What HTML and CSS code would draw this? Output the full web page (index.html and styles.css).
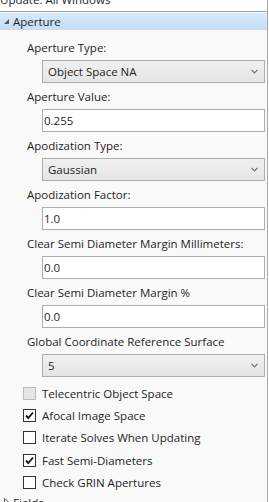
FILE: index.html
```html
<!doctype html>
<html>
<head>
    <title>Aperture</title>
    <meta charset="utf-8">
    <link rel="stylesheet" href="styles.css">
</head>
<body>
    <div class="pane">
        <!-- 上一组 -->
        <div class="update"><span>Update: All Windows</span></div>

        <!-- Aperture -->
        <div class="exp-head open">
            <svg class="arrow" width="6" height="6" viewBox="0 0 6 6"><polygon points="5,0 5,5 0,5" fill="#595959"/></svg>
            <span>Aperture</span>
        </div>
        <div class="exp-body">
            <div class="field">
                <label>Aperture Type:</label>
                <div class="combo"><span>Object Space NA</span>
                    <svg class="chev" width="7" height="5" viewBox="0 0 7 5"><polyline points="0.5,0.8 3.5,3.8 6.5,0.8" fill="none" stroke="#707070" stroke-width="1.2"/></svg>
                </div>
            </div>
            <div class="field">
                <label>Aperture Value:</label>
                <div class="input">0.255</div>
            </div>
            <div class="field">
                <label>Apodization Type:</label>
                <div class="combo"><span>Gaussian</span>
                    <svg class="chev" width="7" height="5" viewBox="0 0 7 5"><polyline points="0.5,0.8 3.5,3.8 6.5,0.8" fill="none" stroke="#707070" stroke-width="1.2"/></svg>
                </div>
            </div>
            <div class="field">
                <label>Apodization Factor:</label>
                <div class="input">1.0</div>
            </div>
            <div class="field">
                <label>Clear Semi Diameter Margin Millimeters:</label>
                <div class="input">0.0</div>
            </div>
            <div class="field">
                <label>Clear Semi Diameter Margin %</label>
                <div class="input">0.0</div>
            </div>
            <div class="field">
                <label>Global Coordinate Reference Surface</label>
                <div class="combo"><span>5</span>
                    <svg class="chev" width="7" height="5" viewBox="0 0 7 5"><polyline points="0.5,0.8 3.5,3.8 6.5,0.8" fill="none" stroke="#707070" stroke-width="1.2"/></svg>
                </div>
            </div>

            <!-- 复选框 -->
            <div class="checks">
                <div class="check disabled"><span class="box"></span>Telecentric Object Space</div>
                <div class="check"><span class="box">
                    <svg width="11" height="11" viewBox="0 0 11 11"><polyline points="2,5.5 4.3,8 9,2.5" fill="none" stroke="#1a1a1a" stroke-width="1.9"/></svg>
                </span>Afocal Image Space</div>
                <div class="check"><span class="box"></span>Iterate Solves When Updating</div>
                <div class="check"><span class="box">
                    <svg width="11" height="11" viewBox="0 0 11 11"><polyline points="2,5.5 4.3,8 9,2.5" fill="none" stroke="#1a1a1a" stroke-width="1.9"/></svg>
                </span>Fast Semi-Diameters</div>
                <div class="check"><span class="box"></span>Check GRIN Apertures</div>
            </div>
        </div>

        <!-- Fields -->
        <div class="exp-head">
            <svg class="arrow" width="6" height="8" viewBox="0 0 6 8"><polygon points="0.5,0.5 4.5,4 0.5,7.5" fill="none" stroke="#595959"/></svg>
            <span>Fields</span>
        </div>
    </div>
</body>
</html>
```

FILE: styles.css
```css
body {
    margin: 0;
    background: #fff;
    font-family: "Open Sans", "Liberation Sans", sans-serif;
    font-size: 11.5px;
    color: #1e1e1e;
}

.pane {
    width: 267px;
    height: 502px;
    overflow: hidden;
    background: #f9f9f9;
    border-right: 1px solid #a9a9a9;
}

.update {
    height: 11px;
    overflow: hidden;
    background: #fff;
    border-bottom: 1px solid #a0a0a0;
    margin-bottom: 1px;
}

.update span {
    display: block;
    line-height: 14px;
    margin-top: -7px;
}

/* 折叠标题 */
.exp-head {
    height: 17px;
    display: flex;
    align-items: center;
}

.exp-head.open {
    background: linear-gradient(#d6e9fc, #c5ddf7);
}

.arrow {
    margin-left: 1px;
    width: 12px;
    flex: none;
}

.exp-head span {
    line-height: 17px;
}

.exp-body {
    padding: 10px 0 0 27px;
}

.field label {
    display: block;
    height: 16px;
    line-height: 16px;
    margin-bottom: 4px;
    white-space: nowrap;
}

.combo,
.input {
    box-sizing: border-box;
    width: 223px;
    height: 23px;
    margin-left: 15px;
    margin-bottom: 6px;
    display: flex;
    align-items: center;
}

.combo {
    border: 1px solid #acacac;
    background: linear-gradient(#f0f0f0, #e5e5e5);
    padding: 0 6px 0 5px;
    justify-content: space-between;
}

.input {
    border: 1px solid #abadb3;
    background: #fff;
    padding-left: 1px;
}

.checks {
    margin: -1px 0 0 -4px;
}

.check {
    height: 22.4px;
    display: flex;
    align-items: center;
}

.box {
    box-sizing: border-box;
    width: 13px;
    height: 13px;
    border: 1px solid #333;
    background: #fff;
    margin-right: 6px;
    display: flex;
    align-items: center;
    justify-content: center;
}

.check.disabled .box {
    border-color: #bcbcbc;
    background: #e6e6e6;
}
```
